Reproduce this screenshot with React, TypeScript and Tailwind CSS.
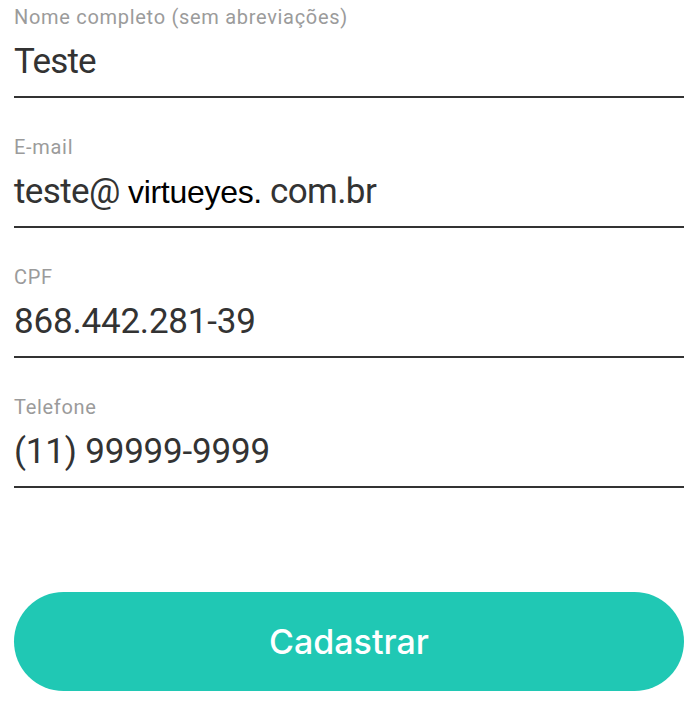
import React from "react";

const fields = [
  { label: "Nome completo (sem abreviações)", value: <span className="tracking-[-0.8px]">Teste</span> },
  {
    label: "E-mail",
    value: (
      <span className="tracking-[-0.6px]">
        teste@ <span className="text-black text-[32px] tracking-[-0.3px] font-['Liberation_Sans',sans-serif]">virtueyes.</span> com.br
      </span>
    ),
  },
  { label: "CPF", value: <>868.442.281-39</> },
  { label: "Telefone", value: <>(11) 99999-9999</> },
];

export default function App() {
  return (
    <div className="w-[696px] h-[702px] bg-white font-['Roboto',sans-serif] pl-[14px] pr-[12px] pt-[4px] flex flex-col">
      {fields.map((f, i) => (
        <div key={i} className="border-b-2 border-[#333333] mb-[36px] pb-[14px] flex flex-col">
          <label className="text-[20px] leading-[26px] text-[#9b9b9b] tracking-[0.7px]">{f.label}</label>
          <div className="text-[35px] leading-[40px] mt-[12px] text-[#333333] tracking-[-0.2px]">{f.value}</div>
        </div>
      ))}
      <button className="mt-[68px] h-[99px] w-full rounded-full bg-[#20c8b4] text-white text-[34px] font-medium font-['Inter',sans-serif]">
        Cadastrar
      </button>
    </div>
  );
}
